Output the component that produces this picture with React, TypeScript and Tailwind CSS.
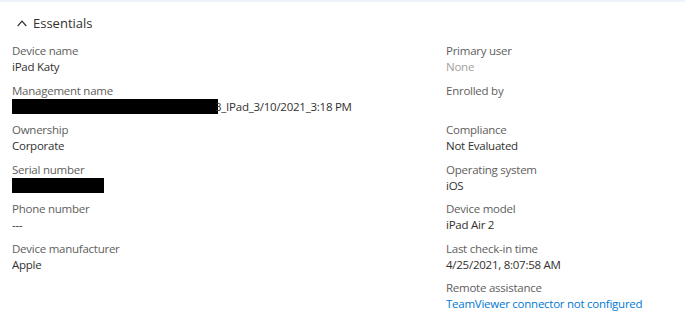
import React from "react";

type Item = { label: string; value?: React.ReactNode; muted?: boolean; link?: boolean };

const left: Item[] = [
  { label: "Device name", value: "iPad Katy" },
  {
    label: "Management name",
    value: (
      <span className="flex items-center">
        <span className="inline-block h-[15px] w-[206px] bg-black" />
        <span className="ml-[-3px]">3_IPad_3/10/2021_3:18 PM</span>
      </span>
    ),
  },
  { label: "Ownership", value: "Corporate" },
  {
    label: "Serial number",
    value: (
      <span className="flex items-center">
        <span className="inline-block h-[15px] w-[92px] bg-black" />
      </span>
    ),
  },
  { label: "Phone number", value: "---" },
  { label: "Device manufacturer", value: "Apple" },
];

const right: Item[] = [
  { label: "Primary user", value: "None", muted: true },
  { label: "Enrolled by", value: "" },
  { label: "Compliance", value: "Not Evaluated" },
  { label: "Operating system", value: "iOS" },
  { label: "Device model", value: "iPad Air 2" },
  { label: "Last check-in time", value: "4/25/2021, 8:07:58 AM" },
  { label: "Remote assistance", value: "TeamViewer connector not configured", link: true },
];

function Field({ item }: { item: Item }) {
  return (
    <div className="flex flex-col">
      <div className="h-[16px] leading-[16px] text-[#605e5c]">{item.label}</div>
      <div
        className={
          "h-[16px] leading-[16px] " +
          (item.link ? "text-[#0078d4]" : item.muted ? "text-[#a19f9d]" : "text-[#323130]")
        }
      >
        {item.value}
      </div>
    </div>
  );
}

export default function App() {
  return (
    <div
      className="h-[325px] w-[685px] overflow-hidden bg-white text-[11.5px] tracking-[-0.25px]"
      style={{ fontFamily: '"Open Sans", "Noto Sans", sans-serif' }}
    >
      <div className="h-[2px] w-full bg-[#eef3fb]" />
      <div className="flex h-[41px] items-center pl-[17px] pt-[2px] tracking-normal">
        <svg width="10" height="7" viewBox="0 0 10 7" className="mr-[6px]">
          <path d="M0.7 6 L5 1.2 L9.3 6" fill="none" stroke="#323130" strokeWidth="1.2" />
        </svg>
        <span className="text-[13px] text-[#323130]">Essentials</span>
      </div>
      <div className="grid grid-cols-[434px_1fr] pl-[12px]">
        <div className="flex flex-col gap-y-[7.5px]">
          {left.map((it) => (
            <Field key={it.label} item={it} />
          ))}
        </div>
        <div className="flex flex-col gap-y-[7.5px]">
          {right.map((it) => (
            <Field key={it.label} item={it} />
          ))}
        </div>
      </div>
    </div>
  );
}
